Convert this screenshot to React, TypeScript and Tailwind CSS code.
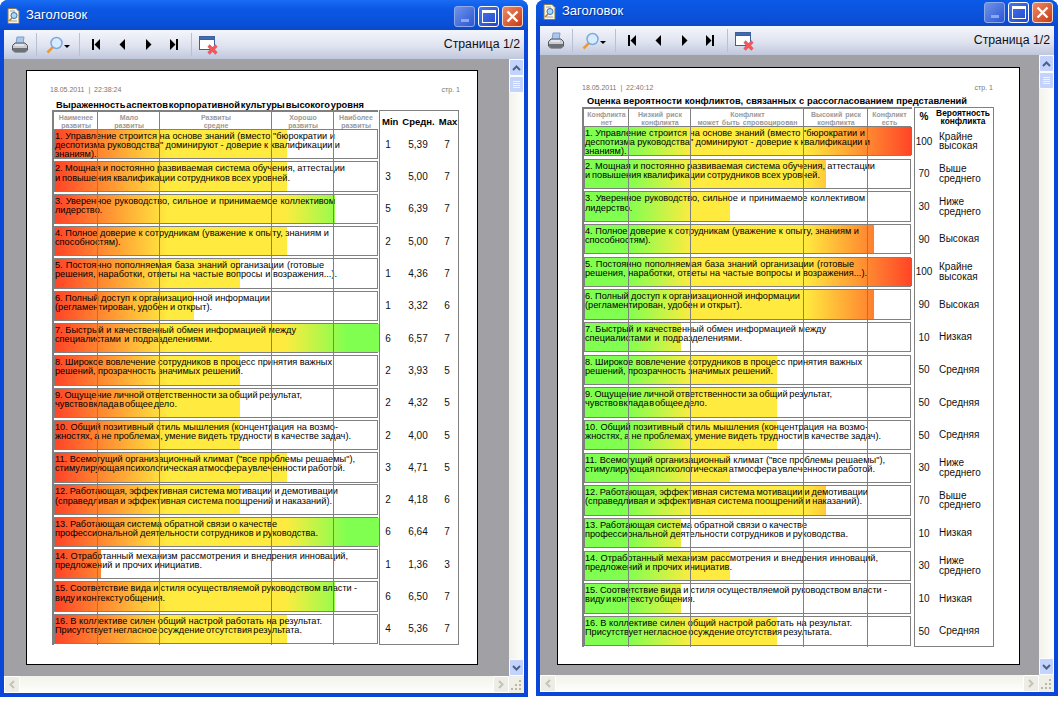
// each line of a row: text and where it has to end, the report stretches them to a fixed width
type Line = [string, number];

const lines: Line[][] = [
  [['1. Управление строится на основе знаний (вместо "бюрократии и', 280], ['деспотизма руководства" доминируют - доверие к квалификации и', 285], ["знаниям).", 40]],
  [["2. Мощная и постоянно развиваемая система обучения, аттестации", 290], ["и повышения квалификации сотрудников всех уровней.", 235]],
  [["3. Уверенное руководство, сильное и принимаемое коллективом", 280], ["лидерство.", 47]],
  [["4. Полное доверие к сотрудникам (уважение к опыту, знаниям и", 274], ["способностям).", 65]],
  [["5. Постоянно пополняемая база знаний организации (готовые", 269], ["решения, наработки, ответы на частые вопросы и возражения...).", 282]],
  [["6. Полный доступ к организационной информации", 215], ["(регламентирован, удобен и открыт).", 157]],
  [["7. Быстрый и качественный обмен информацией между", 241], ["специалистами и подразделениями.", 157]],
  [["8. Широкое вовлечение сотрудников в процесс принятия важных", 277], ["решений, прозрачность значимых решений.", 188]],
  [["9. Ощущение личной ответственности за общий результат,", 247], ["чувство вклада в общее дело.", 122]],
  [["10. Общий позитивный стиль мышления (концентрация на возмо-", 283], ["жностях, а не проблемах, умение видеть трудности в качестве задач).", 296]],
  [['11. Всемогущий организационный климат ("все проблемы решаемы"),', 300], ["стимулирующая психологическая атмосфера увлеченности работой.", 290]],
  [["12. Работающая, эффективная система мотивации и демотивации", 283], ["(справедливая и эффективная система поощрений и наказаний).", 277]],
  [["13. Работающая система обратной связи о качестве", 222], ["профессиональной деятельности сотрудников и руководства.", 263]],
  [["14. Отработанный механизм рассмотрения и внедрения инноваций,", 293], ["предложений и прочих инициатив.", 147]],
  [["15. Соответствие вида и стиля осуществляемой руководством власти -", 302], ["виду и контексту общения.", 110]],
  [["16. В коллективе силен общий настрой работать на результат.", 267], ["Присутствует негласное осуждение отсутствия результата.", 247]],
];

const leftBars = [232, 232, 280, 232, 185, 139, 324, 185, 185, 185, 232, 185, 324, 46, 280, 232];
const rightBars = [327, 241, 145, 289, 327, 289, 96, 192, 192, 192, 145, 241, 96, 145, 96, 192];

const leftStats = [
  ["1", "5,39", "7"], ["3", "5,00", "7"], ["5", "6,39", "7"], ["2", "5,00", "7"],
  ["1", "4,36", "7"], ["1", "3,32", "6"], ["6", "6,57", "7"], ["2", "3,93", "5"],
  ["2", "4,32", "5"], ["2", "4,00", "5"], ["3", "4,71", "5"], ["2", "4,18", "6"],
  ["6", "6,64", "7"], ["1", "1,36", "3"], ["6", "6,50", "7"], ["4", "5,36", "7"],
];

const rightStats = [
  ["100", "Крайне", "высокая"], ["70", "Выше", "среднего"], ["30", "Ниже", "среднего"], ["90", "Высокая"],
  ["100", "Крайне", "высокая"], ["90", "Высокая"], ["10", "Низкая"], ["50", "Средняя"],
  ["50", "Средняя"], ["50", "Средняя"], ["30", "Ниже", "среднего"], ["70", "Выше", "среднего"],
  ["10", "Низкая"], ["30", "Ниже", "среднего"], ["10", "Низкая"], ["50", "Средняя"],
];

const leftHead = [["Наименее", "развиты"], ["Мало", "развиты"], ["Развиты", "средне"], ["Хорошо", "развиты"], ["Наиболее", "развиты"]];
const rightHead = [["Конфликта", "нет"], ["Низкий риск", "конфликта"], ["Конфликт", "может быть спровоцирован"], ["Высокий риск", "конфликта"], ["Конфликт", "есть"]];

function Printer() {
  return (
    <svg width="18" height="18" viewBox="0 0 18 18">
      <path d="M6 1h7l-1 7H5z" fill="#a9c8f0" stroke="#7f9cc8" />
      <path d="M1.5 9.5 4 7h10l2.5 2.5v4.5l-2 2h-11l-2-2z" fill="#c9ccd2" stroke="#55585e" />
      <path d="M2 12h14v2l-2 2H4l-2-2z" fill="#6d7075" />
      <path d="M4 9h9" stroke="#ffffff" />
    </svg>
  );
}

function Magnifier() {
  return (
    <svg width="17" height="18" viewBox="0 0 17 18">
      <path d="M7 11 1.5 16.5" stroke="#e89a3c" strokeWidth="2.5" />
      <circle cx="10.5" cy="7" r="5.5" fill="#d8ecff" stroke="#7fa8dc" strokeWidth="1.5" />
    </svg>
  );
}

function Nav({ kind }: { kind: "first" | "prev" | "next" | "last" }) {
  return (
    <svg width="10" height="11" viewBox="0 0 10 11" fill="#000000">
      {kind === "first" && <path d="M1 0h2v11H1zM9 0v11L3.5 5.5z" />}
      {kind === "prev" && <path d="M7 0v11L1.5 5.5z" />}
      {kind === "next" && <path d="M2 0v11l5.5-5.5z" />}
      {kind === "last" && <path d="M1 0v11l5.5-5.5zM7 0h2v11H7z" />}
    </svg>
  );
}

function CloseWin() {
  return (
    <svg width="20" height="20" viewBox="0 0 20 20">
      <rect x="0.5" y="0.5" width="15" height="13" fill="#ffffff" stroke="#3f5f98" />
      <rect x="0.5" y="0.5" width="15" height="3" fill="#3f6cb8" stroke="#3f5f98" />
      <path d="m9.5 9.5 8 8m0-8-8 8" stroke="#f0585c" strokeWidth="3.2" />
    </svg>
  );
}

function DocIcon() {
  return (
    <svg width="15" height="17" viewBox="0 0 15 17">
      <path d="M2 .5h8l3 3v12H2z" fill="#f8f4e6" stroke="#8a7a50" />
      <path d="M4 3h5M4 13h7" stroke="#a0a0a0" />
      <circle cx="8" cy="7.5" r="3" fill="#a8d8f8" stroke="#3a70b0" />
      <path d="M6 10 3 13" stroke="#c07820" strokeWidth="1.5" />
    </svg>
  );
}

function TitleButtons() {
  return (
    <div className="ml-auto mr-[2px] flex gap-[3px]">
      <div className="flex h-[21px] w-[21px] items-end justify-center rounded-[3px] border border-[#8fa8e8] bg-[linear-gradient(135deg,#6f94e8,#2a56d4)] pb-[4px]">
        <div className="h-[3px] w-[8px] bg-[#8ba8ec]" />
      </div>
      <div className="flex h-[21px] w-[21px] items-center justify-center rounded-[3px] border border-white bg-[linear-gradient(135deg,#4c78e8,#1f48cc)]">
        <div className="h-[13px] w-[14px] border border-t-[3px] border-white" />
      </div>
      <div className="flex h-[21px] w-[21px] items-center justify-center rounded-[3px] border border-[#f4d8cc] bg-[linear-gradient(135deg,#ec8a68,#c83a14)]">
        <svg width="13" height="13" viewBox="0 0 13 13">
          <path d="m1.5 1.5 10 10m0-10-10 10" stroke="#ffffff" strokeWidth="2.4" />
        </svg>
      </div>
    </div>
  );
}

function Toolbar() {
  return (
    <div className="flex h-[29px] shrink-0 items-center bg-[linear-gradient(#f4f6fb,#dfe3ef_55%,#bfc7dc)]">
      <div className="ml-[7px]"><Printer /></div>
      <div className="ml-[7px] h-[23px] w-px bg-[#b8c0d4]" />
      <div className="ml-[9px]"><Magnifier /></div>
      <div className="ml-[1px] mt-[3px] h-0 w-0 border-x-[3px] border-t-[3px] border-x-transparent border-t-black" />
      <div className="ml-[9px] h-[23px] w-px bg-[#b8c0d4]" />
      <div className="ml-[11px]"><Nav kind="first" /></div>
      <div className="ml-[17px]"><Nav kind="prev" /></div>
      <div className="ml-[16px]"><Nav kind="next" /></div>
      <div className="ml-[15px]"><Nav kind="last" /></div>
      <div className="ml-[12px] h-[23px] w-px bg-[#b8c0d4]" />
      <div className="ml-[7px] mt-[2px]"><CloseWin /></div>
      <div className="ml-auto mr-[4px] text-[12.3px] text-[#111111]">Страница 1/2</div>
    </div>
  );
}

function VScroll() {
  return (
    <div className="flex w-[15px] shrink-0 flex-col bg-[linear-gradient(90deg,#f3f3ec,#fefefb)]">
      <div className="flex h-[17px] items-center justify-center rounded-[2px] border border-[#fafcff] bg-[#c3d3fb]">
        <svg width="9" height="6" viewBox="0 0 9 6"><path d="m1 5 3.5-3.5L8 5" fill="none" stroke="#4d6185" strokeWidth="2" /></svg>
      </div>
      <div className="flex h-[17px] flex-col items-center justify-center gap-px rounded-[2px] border border-[#fafcff] bg-[#c3d3fb]">
        <div className="h-px w-[7px] bg-[#eef4ff]" />
        <div className="h-px w-[7px] bg-[#eef4ff]" />
        <div className="h-px w-[7px] bg-[#eef4ff]" />
        <div className="h-px w-[7px] bg-[#eef4ff]" />
      </div>
      <div className="mt-auto flex h-[17px] items-center justify-center rounded-[2px] border border-[#fafcff] bg-[#c3d3fb]">
        <svg width="9" height="6" viewBox="0 0 9 6"><path d="m1 1 3.5 3.5L8 1" fill="none" stroke="#4d6185" strokeWidth="2" /></svg>
      </div>
    </div>
  );
}

function HScroll() {
  return (
    <div className="flex h-[17px] shrink-0 bg-[linear-gradient(#f3f3ec,#fefefb)]">
      <div className="flex w-[16px] items-center justify-center rounded-[2px] border border-white bg-[#eeede5]">
        <svg width="6" height="9" viewBox="0 0 6 9"><path d="M5 1 1.5 4.5 5 8" fill="none" stroke="#c4c3b8" strokeWidth="2" /></svg>
      </div>
      <div className="ml-auto flex w-[16px] items-center justify-center rounded-[2px] border border-white bg-[#eeede5]">
        <svg width="6" height="9" viewBox="0 0 6 9"><path d="m1 1 3.5 3.5L1 8" fill="none" stroke="#c4c3b8" strokeWidth="2" /></svg>
      </div>
      <div className="flex w-[15px] items-end justify-end bg-[#f0efe6] p-[2px]">
        <svg width="11" height="11" viewBox="0 0 11 11" fill="#b8b7ac">
          <path d="M8 0h2v2H8zM4 4h2v2H4zM8 4h2v2H8zM0 8h2v2H0zM4 8h2v2H4zM8 8h2v2H8z" />
        </svg>
      </div>
    </div>
  );
}

function Row({ text, bar, track, right }: { text: Line[]; bar: number; track: number; right: boolean }) {
  return (
    <div className="relative h-[30.4px] shrink-0 border border-[#808080] bg-white">
      <div
        className={
          right
            ? "absolute inset-y-0 left-0 bg-[linear-gradient(90deg,#80ff50_13%,#ffeb3f_33%,#ffeb3f_67%,#ff4427_100%)]"
            : "absolute inset-y-0 left-0 bg-[linear-gradient(90deg,#ff4427_0%,#ffeb3f_35%,#ffeb3f_71%,#80ff50_90%)]"
        }
        style={{ width: bar, backgroundSize: `${track}px 100%`, backgroundRepeat: "no-repeat" }}
      />
      <div className="relative pt-[2px] text-[9.2px] leading-[9.2px] whitespace-nowrap text-black [word-spacing:-2.6px] [text-align-last:justify]">
        {text.map((l) => (
          <div key={l[0]} style={{ width: l[1] }}>{l[0]}</div>
        ))}
      </div>
    </div>
  );
}

function Report({ right }: { right: boolean }) {
  const bars = right ? rightBars : leftBars;
  const head = right ? rightHead : leftHead;
  const track = right ? 327 : 324;
  const gridCols = right ? "grid-cols-[45px_62px_113px_64px_43px]" : "grid-cols-[44px_62px_112px_62px_44px]";
  return (
    <div className="flex">
      <div className={right ? "relative w-[330px] border-l-2 border-[#808080]" : "relative w-[326px] border-l-2 border-[#808080]"}>
        <div className="h-[19px] border-t-2 border-[#808080]">
          <div className={`grid ${gridCols}`}>
            {head.map((h) => (
              <div key={h[0]} className="pt-[2px] text-center text-[7px] leading-[7.5px] font-bold whitespace-nowrap text-[#9a9a9a] [word-spacing:1px]">
                <div>{h[0]}</div>
                <div>{h[1]}</div>
              </div>
            ))}
          </div>
        </div>
        <div className={right ? "flex w-[327px] flex-col gap-[2.27px]" : "flex w-[324px] flex-col gap-[1.93px]"}>
          {lines.map((l, i) => (
            <Row key={i} text={l} bar={bars[i]} track={track} right={right} />
          ))}
        </div>
        <div className={`pointer-events-none absolute inset-y-0 left-0 grid ${gridCols}`}>
          <div className="border-r border-[#808080]" />
          <div className="border-r border-[#808080]" />
          <div className="border-r border-[#808080]" />
          <div className="border-r border-[#808080]" />
          <div />
        </div>
      </div>
      {right ? <RightStats /> : <LeftStats />}
    </div>
  );
}

function LeftStats() {
  return (
    <div className="ml-[1px] flex w-[80px] flex-col border border-[#808080] text-[10px] text-[#111111]">
      <div className="flex h-[18px] shrink-0 items-center gap-[4px] pt-[4px] pl-[2px] text-[9.5px] font-bold text-black">
        <div>Min</div>
        <div>Средн.</div>
        <div>Max</div>
      </div>
      <div className="flex flex-col gap-[1.93px]">
        {leftStats.map((s, i) => (
          <div key={i} className="grid h-[30.4px] shrink-0 grid-cols-[16px_44px_14px] items-center text-center">
            <div>{s[0]}</div>
            <div>{s[1]}</div>
            <div>{s[2]}</div>
          </div>
        ))}
      </div>
    </div>
  );
}

function RightStats() {
  return (
    <div className="ml-[2px] flex w-[80px] flex-col border border-[#808080] text-[10px] text-[#111111]">
      <div className="grid h-[18px] shrink-0 grid-cols-[18px_60px] items-center text-center text-[8.4px] leading-[8px] font-bold text-black">
        <div className="text-[10px]">%</div>
        <div>
          <div>Вероятность</div>
          <div>конфликта</div>
        </div>
      </div>
      <div className="flex flex-col gap-[2.27px]">
        {rightStats.map((s, i) => (
          <div key={i} className="grid h-[30.4px] shrink-0 grid-cols-[18px_60px] items-center">
            <div className="text-center">{s[0]}</div>
            <div className="pl-[6px] leading-[9.4px]">
              {s.slice(1).map((t) => (
                <div key={t}>{t}</div>
              ))}
            </div>
          </div>
        ))}
      </div>
    </div>
  );
}

function Window({ right }: { right: boolean }) {
  return (
    <div
      className={
        right
          ? "ml-[8px] flex h-[696px] w-[522px] flex-col overflow-hidden rounded-t-[8px] bg-[#0a46d8] px-[4px] pb-[4px]"
          : "flex h-[697px] w-[528px] flex-col overflow-hidden rounded-t-[8px] bg-[#0a46d8] px-[4px] pb-[4px]"
      }
    >
      <div className={right ? "-mx-[4px] flex h-[26px] shrink-0 items-end bg-[linear-gradient(#0a5ae8,#0b50d8_70%,#0a48cc)] pr-[3px] pb-[3px] pl-[6px]" : "-mx-[4px] flex h-[30px] shrink-0 items-end bg-[linear-gradient(#1a6cf4_0%,#0b58e4_30%,#0a50d8_80%,#0a48cc)] pr-[3px] pb-[3px] pl-[6px]"}>
        <div className="mb-[2px]"><DocIcon /></div>
        <div className="mb-[3px] ml-[5px] text-[13px] text-white [text-shadow:1px_1px_#0a2fa0]">Заголовок</div>
        <TitleButtons />
      </div>
      <Toolbar />
      <div className="flex min-h-0 flex-1 bg-[#a0a0a5]">
        <div className={right ? "min-w-0 flex-1 pt-[12px] pl-[17px]" : "min-w-0 flex-1 pt-[11px] pl-[22px]"}>
          <div className={right ? "h-[598px] w-[463px] border border-black bg-white pt-[15px] pl-[24px]" : "h-[595px] w-[452px] border border-black bg-white pt-[14px] pl-[25px]"}>
            <div className={right ? "flex h-[12px] w-[412px] justify-between pr-[1px] text-[7px] whitespace-pre text-[#777777]" : "-ml-[2px] flex h-[15px] w-[410px] justify-between text-[7px] whitespace-pre text-[#777777]"}>
              <span>{right ? "18.05.2011  |  22:40:12" : "18.05.2011  |  22:38:24"}</span>
              <span>стр. 1</span>
            </div>
            <div className={right ? "ml-[5px] h-[12px] w-[380px] text-[9.3px] leading-[12px] font-bold whitespace-nowrap text-black [word-spacing:-3px] [text-align-last:justify]" : "ml-[4px] h-[10px] w-[308px] text-[9.3px] leading-[10px] font-bold whitespace-nowrap text-black [word-spacing:-3px] [text-align-last:justify]"}>
              {right ? "Оценка вероятности конфликтов, связанных с рассогласованием представлений" : "Выраженность аспектов корпоративной культуры высокого уровня"}
            </div>
            <Report right={right} />
          </div>
        </div>
        <VScroll />
      </div>
      <HScroll />
    </div>
  );
}

export default function App() {
  return (
    <div className="flex h-[701px] w-[1058px] items-start overflow-hidden bg-white font-['Liberation_Sans',Arial,sans-serif]">
      <Window right={false} />
      <Window right />
    </div>
  );
}
